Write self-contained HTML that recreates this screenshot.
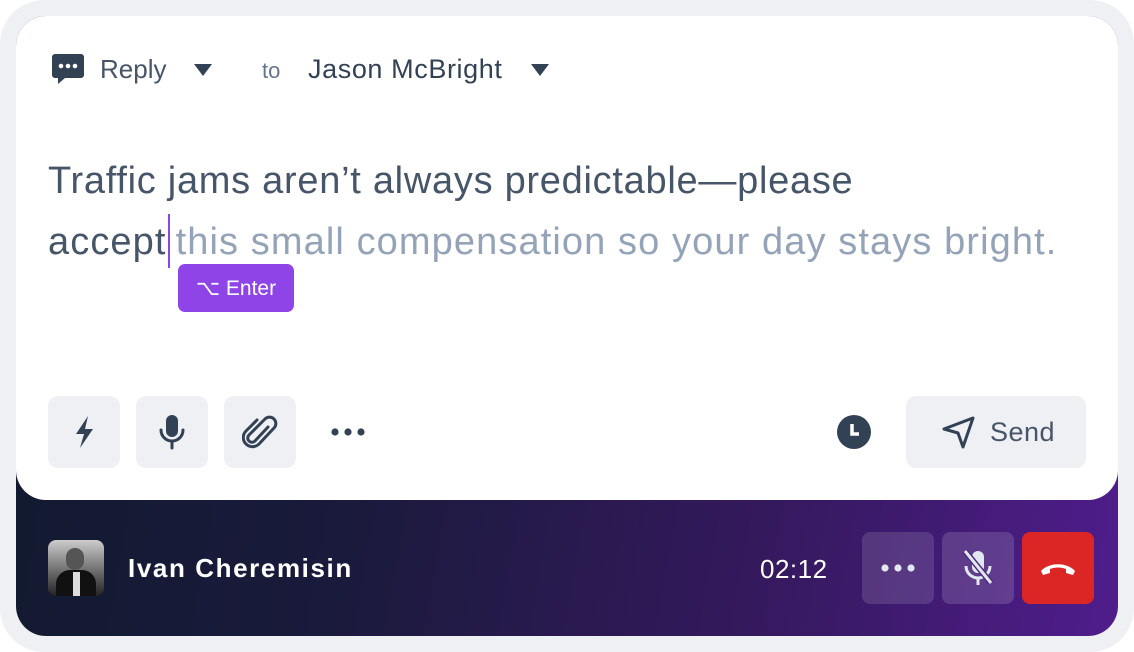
<!DOCTYPE html>
<html><head><style>
*{margin:0;padding:0;box-sizing:border-box}
body{width:1134px;height:652px;background:#fff;font-family:"Liberation Sans",sans-serif;position:relative;overflow:hidden}
.outer{position:absolute;left:0;top:0;width:1134px;height:652px;background:#eef0f4;border-radius:44px}
.dark{position:absolute;left:16px;top:16px;width:1102px;height:620px;border-radius:30px;background:linear-gradient(100deg,#101a2e 0%,#1a1a3c 35%,#35195e 70%,#4f1d8c 100%)}
.card{position:absolute;left:16px;top:16px;width:1102px;height:484px;background:#fff;border-radius:30px}
.t{position:absolute;white-space:nowrap}
.btn{position:absolute;top:396px;width:72px;height:72px;border-radius:10px;background:#eef0f4;display:flex;align-items:center;justify-content:center}
.cb{position:absolute;top:532px;width:72px;height:72px;border-radius:8px;display:flex;align-items:center;justify-content:center}
</style></head><body>
<div class="outer"></div>
<div class="dark"></div>
<div class="card"></div>
<svg class="t" style="left:51px;top:53px" width="34" height="32" viewBox="0 0 34 32"><path d="M4 1h26a3 3 0 0 1 3 3v18a3 3 0 0 1-3 3H14l-7 6v-6H4a3 3 0 0 1-3-3V4a3 3 0 0 1 3-3z" fill="#334155"/><circle cx="10" cy="13" r="2.3" fill="#fff"/><circle cx="17" cy="13" r="2.3" fill="#fff"/><circle cx="24" cy="13" r="2.3" fill="#fff"/></svg>
<div class="t" style="left:100px;top:54px;font-size:26px;color:#475569">Reply</div>
<svg class="t" style="left:193px;top:63px" width="20" height="14"><path d="M1 1h18L10 13z" fill="#334155"/></svg>
<div class="t" style="left:262px;top:58px;font-size:22px;color:#64748b">to</div>
<div class="t" style="left:308px;top:54px;font-size:27px;color:#334155;letter-spacing:0.6px">Jason McBright</div>
<svg class="t" style="left:530px;top:63px" width="20" height="14"><path d="M1 1h18L10 13z" fill="#334155"/></svg>
<div class="t" style="left:48px;top:160px;font-size:38px;color:#475569;letter-spacing:0.72px">Traffic jams aren’t always predictable—please</div>
<div class="t" style="left:48px;top:214px;font-size:38px;color:#475569;letter-spacing:1.1px">accept<span style="display:inline-block;width:2px;height:54px;background:#8b46e6;vertical-align:-14px;margin:0 6px 0 1px"></span><span style="color:#94a3b8">this small compensation so your day stays bright.</span></div>
<div class="t" style="left:178px;top:264px;width:116px;height:48px;border-radius:7px;background:#8e44e6;color:#fff;font-size:21px;display:flex;align-items:center;justify-content:center">⌥ Enter</div>
<div class="btn" style="left:48px"><svg width="24" height="36" viewBox="0 0 24 36"><path d="M16 2L4 20h8l-4 14 13-19h-8z" fill="#334155"/></svg></div>
<div class="btn" style="left:136px"><svg width="30" height="38" viewBox="0 0 30 38"><rect x="9" y="2" width="12" height="22" rx="6" fill="#334155"/><path d="M4 17a11 11 0 0 0 22 0M15 28v7" stroke="#334155" stroke-width="3" fill="none" stroke-linecap="round"/></svg></div>
<div class="btn" style="left:224px"><svg width="36" height="38" viewBox="0 0 36 38"><path d="M26 14L13 28a4 4 0 0 1-6-6L23 6a6 6 0 0 1 9 9L17 31a9 9 0 0 1-13-13L15 7" stroke="#334155" stroke-width="3" fill="none" stroke-linecap="round"/></svg></div>
<svg class="t" style="left:330px;top:426px" width="36" height="12"><circle cx="5" cy="6" r="3.6" fill="#334155"/><circle cx="18" cy="6" r="3.6" fill="#334155"/><circle cx="31" cy="6" r="3.6" fill="#334155"/></svg>
<svg class="t" style="left:837px;top:415px" width="34" height="34"><circle cx="17" cy="17" r="17" fill="#334155"/><path d="M15 9v10h7" stroke="#fff" stroke-width="3.5" fill="none"/></svg>
<div class="t" style="left:906px;top:396px;width:180px;height:72px;border-radius:10px;background:#eef0f4"></div>
<svg class="t" style="left:942px;top:415px" width="34" height="34" viewBox="0 0 34 34"><path d="M2 14L31 3 21 32l-5-14z" stroke="#334155" stroke-width="3" fill="none" stroke-linejoin="round"/></svg>
<div class="t" style="left:990px;top:417px;font-size:27px;color:#475569;letter-spacing:0.5px">Send</div>
<div class="t" style="left:48px;top:540px;width:56px;height:56px;border-radius:8px;background:linear-gradient(180deg,#ccc 0%,#888 40%,#222 100%);overflow:hidden"><div style="position:absolute;left:18px;top:8px;width:18px;height:22px;border-radius:9px;background:#555"></div><div style="position:absolute;left:8px;top:30px;width:40px;height:30px;border-radius:14px 14px 0 0;background:#111"></div><div style="position:absolute;left:25px;top:32px;width:7px;height:24px;background:#ddd"></div></div>
<div class="t" style="left:128px;top:553px;font-size:26px;color:#fff;font-weight:bold;letter-spacing:1.6px">Ivan Cheremisin</div>
<div class="t" style="left:760px;top:554px;font-size:26px;color:#fff;letter-spacing:0.5px">02:12</div>
<div class="cb" style="left:862px;background:rgba(255,255,255,0.13)"><svg width="36" height="12"><circle cx="5" cy="6" r="3.6" fill="#e2e8f0"/><circle cx="18" cy="6" r="3.6" fill="#e2e8f0"/><circle cx="31" cy="6" r="3.6" fill="#e2e8f0"/></svg></div>
<div class="cb" style="left:942px;background:rgba(255,255,255,0.15)"><svg width="34" height="40" viewBox="0 0 34 40"><rect x="11" y="3" width="12" height="22" rx="6" fill="#e2e8f0"/><path d="M5 18a12 12 0 0 0 24 0M17 30v7" stroke="#e2e8f0" stroke-width="3" fill="none"/><path d="M4 3l26 32" stroke="#4b2a80" stroke-width="6"/><path d="M4 3l26 32" stroke="#e2e8f0" stroke-width="3"/></svg></div>
<div class="cb" style="left:1022px;background:#dc2626"><svg width="40" height="20" viewBox="0 0 40 20"><path d="M3 13c8-9 26-9 34 0l-2 4-7-2v-4c-5-2-11-2-16 0v4l-7 2z" fill="#fff"/></svg></div>
</body></html>
